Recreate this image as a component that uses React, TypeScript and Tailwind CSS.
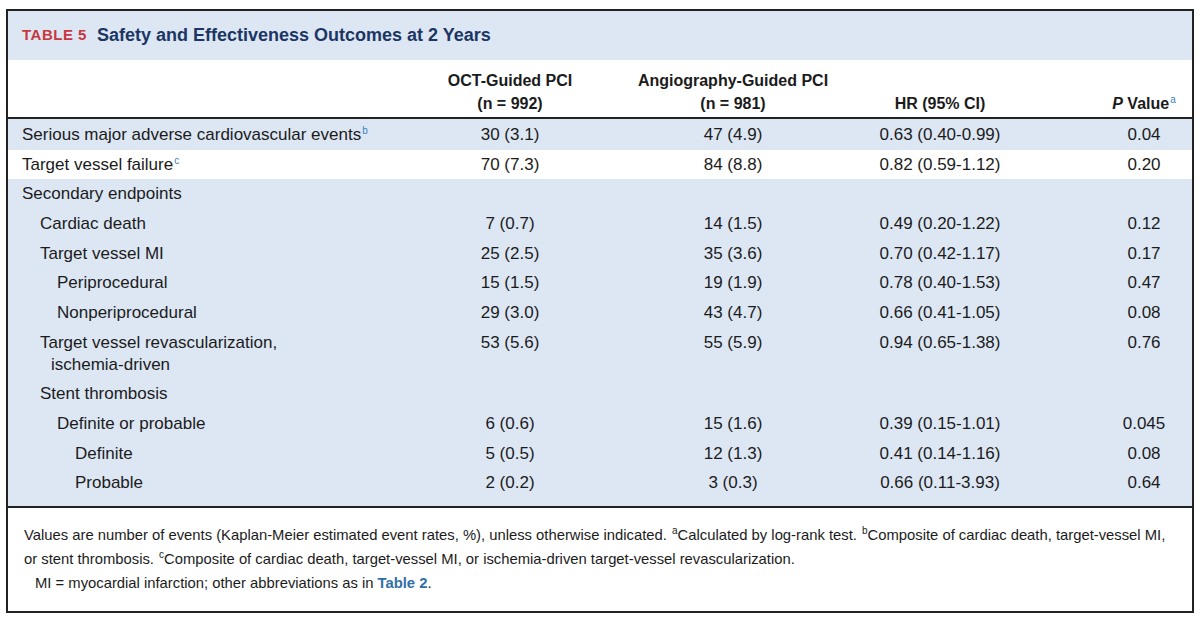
const cols = "grid grid-cols-[402px_200px_246px_168px_1fr]";

type Row = {
  label: string[];
  sup?: string;
  indent: number;
  oct?: string;
  ang?: string;
  hr?: string;
  p?: string;
  white?: boolean;
};

const rows: Row[] = [
  { label: ["Serious major adverse cardiovascular events"], sup: "b", indent: 0, oct: "30 (3.1)", ang: "47 (4.9)", hr: "0.63 (0.40-0.99)", p: "0.04" },
  { label: ["Target vessel failure"], sup: "c", indent: 0, oct: "70 (7.3)", ang: "84 (8.8)", hr: "0.82 (0.59-1.12)", p: "0.20", white: true },
  { label: ["Secondary endpoints"], indent: 0 },
  { label: ["Cardiac death"], indent: 1, oct: "7 (0.7)", ang: "14 (1.5)", hr: "0.49 (0.20-1.22)", p: "0.12" },
  { label: ["Target vessel MI"], indent: 1, oct: "25 (2.5)", ang: "35 (3.6)", hr: "0.70 (0.42-1.17)", p: "0.17" },
  { label: ["Periprocedural"], indent: 2, oct: "15 (1.5)", ang: "19 (1.9)", hr: "0.78 (0.40-1.53)", p: "0.47" },
  { label: ["Nonperiprocedural"], indent: 2, oct: "29 (3.0)", ang: "43 (4.7)", hr: "0.66 (0.41-1.05)", p: "0.08" },
  { label: ["Target vessel revascularization,", "ischemia-driven"], indent: 1, oct: "53 (5.6)", ang: "55 (5.9)", hr: "0.94 (0.65-1.38)", p: "0.76" },
  { label: ["Stent thrombosis"], indent: 1 },
  { label: ["Definite or probable"], indent: 2, oct: "6 (0.6)", ang: "15 (1.6)", hr: "0.39 (0.15-1.01)", p: "0.045" },
  { label: ["Definite"], indent: 3, oct: "5 (0.5)", ang: "12 (1.3)", hr: "0.41 (0.14-1.16)", p: "0.08" },
  { label: ["Probable"], indent: 3, oct: "2 (0.2)", ang: "3 (0.3)", hr: "0.66 (0.11-3.93)", p: "0.64" },
];

const indents = ["pl-[14px]", "pl-[32px]", "pl-[49px]", "pl-[67px]"];

// small superscript letter, kept inline so it doesn't push the line box
function Sup({ c, blue = true }: { c: string; blue?: boolean }) {
  return (
    <span className={`text-[10px] leading-none relative -top-[6px] ml-[1px] font-normal ${blue ? "text-[#3d7fbf]" : ""}`}>{c}</span>
  );
}

function BodyRow({ r }: { r: Row }) {
  return (
    <div className={`${cols} items-start py-[3.85px] leading-[22px] ${r.white ? "bg-white" : ""}`}>
      <div className={indents[r.indent]}>
        <div className="whitespace-nowrap">
          {r.label[0]}
          {r.sup && <Sup c={r.sup} />}
        </div>
        {r.label[1] && <div className="pl-[11px] whitespace-nowrap">{r.label[1]}</div>}
      </div>
      <div className="text-center">{r.oct}</div>
      <div className="text-center">{r.ang}</div>
      <div className="text-center">{r.hr}</div>
      <div className="text-center pl-[72px]">{r.p}</div>
    </div>
  );
}

export default function App() {
  return (
    <div className="w-[1200px] h-[618px] bg-white pt-[9px] px-[6px] text-[#1b1b1b]" style={{ fontFamily: '"Liberation Sans", Arial, sans-serif' }}>
      <div className="border-2 border-[#222] h-[604px] flex flex-col">
        <div className="h-[49px] bg-[#dde7f4] flex items-center pl-[14px]">
          <span className="text-[15px] font-bold tracking-[0.5px] text-[#c8373c]">TABLE 5</span>
          <span className="ml-[10px] text-[18px] font-bold text-[#1c3664]">Safety and Effectiveness Outcomes at 2 Years</span>
        </div>

        <div className={`${cols} h-[59px] items-end pb-[2px] border-b-2 border-[#222] text-[16px] font-bold leading-[23px]`}>
          <div></div>
          <div className="text-center">
            <div>OCT-Guided PCI</div>
            <div>(n = 992)</div>
          </div>
          <div className="text-center">
            <div>Angiography-Guided PCI</div>
            <div>(n = 981)</div>
          </div>
          <div className="text-center">HR (95% CI)</div>
          <div className="text-center pl-[72px] whitespace-nowrap">
            <i>P</i> Value<Sup c="a" />
          </div>
        </div>

        <div className="bg-[#dde7f4] text-[17px] pb-[8px] border-b-2 border-[#222]">
          <div className="pt-[1px] bg-[#dde7f4]"></div>
          {rows.map((r, i) => (
            <BodyRow key={i} r={r} />
          ))}
        </div>

        <div className="pt-[15px] pl-[16px] text-[14.8px] leading-[24px]">
          <div className="whitespace-nowrap">
            Values are number of events (Kaplan-Meier estimated event rates, %), unless otherwise indicated. <Sup c="a" blue={false} />Calculated by log-rank test. <Sup c="b" blue={false} />Composite of cardiac death, target-vessel MI,
          </div>
          <div className="whitespace-nowrap">
            or stent thrombosis. <Sup c="c" blue={false} />Composite of cardiac death, target-vessel MI, or ischemia-driven target-vessel revascularization.
          </div>
          <div className="whitespace-nowrap pl-[11px]">
            MI = myocardial infarction; other abbreviations as in <span className="font-bold text-[#2f6fa8]">Table 2</span>.
          </div>
        </div>
      </div>
    </div>
  );
}
